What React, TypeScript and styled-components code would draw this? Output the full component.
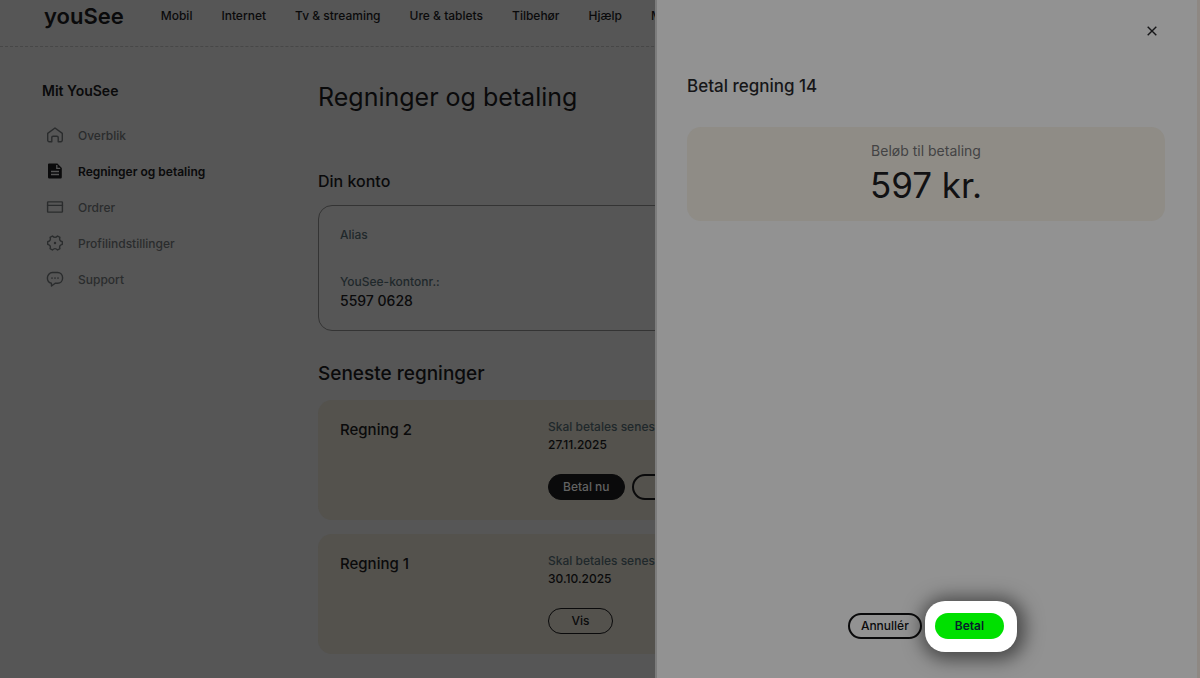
import React from "react";
import styled, { createGlobalStyle, css } from "styled-components";

const ink = "#0a0a0b";
const muted = "#2a2c2d";

const GlobalStyle = createGlobalStyle`
  *, *::before, *::after { box-sizing: border-box; }
  html, body, #root { height: 100%; }
  body {
    margin: 0;
    background: #565656;
    color: ${ink};
    font-family: Inter, "Liberation Sans", sans-serif;
    font-size: 12px;
    overflow: hidden;
  }
  h1, h2, h3, p, dl, dt, dd, ul { margin: 0; padding: 0; }
  ul { list-style: none; }
  a { color: inherit; text-decoration: none; }
  button { font-family: inherit; cursor: pointer; }
`;

const Page = styled.div`
  min-height: 100%;
  overflow: hidden;
`;

const Header = styled.header`
  display: flex;
  align-items: center;
  gap: 37px;
  height: 47px;
  padding: 0 44px 14px;
  border-bottom: 1px dashed #474747;
`;

const Logo = styled.a`
  font-size: 22px;
  line-height: 28px;
  font-weight: 600;
`;

const Nav = styled.nav`
  display: flex;
  gap: 29px;
  font-weight: 500;
  line-height: 20px;
  white-space: nowrap;
`;

const Body = styled.div`
  display: grid;
  grid-template-columns: 276px minmax(0, 1fr);
  padding: 34px 42px 24px;
`;

const SideTitle = styled.h2`
  font-size: 14px;
  line-height: 20px;
  font-weight: 600;
`;

const SideList = styled.ul`
  display: flex;
  flex-direction: column;
  margin-top: 16px;
`;

const SideLink = styled.a<{ $active?: boolean }>`
  display: flex;
  align-items: center;
  gap: 14px;
  height: 36px;
  padding-left: 4px;
  color: ${(p) => (p.$active ? ink : muted)};
  font-weight: ${(p) => (p.$active ? 600 : 500)};

  svg { flex: none; }
`;

const PageTitle = styled.h1`
  font-size: 25px;
  line-height: 32px;
  font-weight: 400;
`;

const SectionTitle = styled.h2<{ $large?: boolean }>`
  font-size: ${(p) => (p.$large ? 19 : 16)}px;
  line-height: 24px;
  font-weight: 500;
`;

const AccountSection = styled.section`
  margin-top: 56px;
`;

const AccountCard = styled.dl`
  display: flex;
  flex-direction: column;
  gap: 27px;
  min-height: 126px;
  margin-top: 12px;
  padding: 19px 21px 18px;
  border: 1px solid #343434;
  border-radius: 14px;
`;

const Term = styled.dt`
  color: #1f282b;
  line-height: 20px;
  font-weight: 500;
`;

const AccountNumber = styled.dd`
  font-size: 14px;
  line-height: 18px;
  font-weight: 500;
`;

const BillSection = styled.section`
  margin-top: 31px;
`;

const BillList = styled.div`
  display: flex;
  flex-direction: column;
  gap: 14px;
  margin-top: 14px;
`;

const BillCard = styled.article`
  display: grid;
  grid-template-columns: 208px minmax(0, 1fr);
  min-height: 120px;
  padding: 18px 22px;
  border-radius: 14px;
  background: #54524d;
`;

const BillTitle = styled.h3`
  font-size: 15px;
  line-height: 24px;
  font-weight: 500;
`;

const DueLabel = styled.p`
  color: #1f282b;
  line-height: 18px;
  font-weight: 500;
  white-space: nowrap;
`;

const DueDate = styled.p`
  line-height: 18px;
  font-weight: 500;
`;

const Actions = styled.div`
  display: flex;
  gap: 7px;
  margin-top: 20px;
`;

const Pill = styled.button<{ $variant?: "solid" | "outline" | "pay"; $thick?: boolean }>`
  height: 26px;
  min-width: 65px;
  padding: 0 14px;
  border: 1px solid ${ink};
  border-radius: 13px;
  background: transparent;
  color: ${ink};
  font-size: 12px;
  font-weight: 500;
  line-height: 20px;

  ${(p) => p.$thick && css`
    padding: 0 11px;
    border-width: 2px;
  `}

  ${(p) => p.$variant === "solid" && css`
    background: ${ink};
    color: #626262;
  `}

  ${(p) => p.$variant === "pay" && css`
    padding: 0 20px;
    border: 0;
    background: #00e000;
    color: #06202a;
    font-weight: 600;
  `}
`;

const Drawer = styled.aside`
  position: fixed;
  inset: 0 0 0 auto;
  display: flex;
  flex-direction: column;
  width: min(545px, 100%);
  padding: 16px 32px 39px 30px;
  border-left: 2px solid #7c7c7c;
  border-right: 3px solid #8e8883;
  background: #929292;
`;

const CloseButton = styled.button`
  display: flex;
  align-items: center;
  justify-content: center;
  align-self: flex-end;
  width: 26px;
  height: 30px;
  padding: 0;
  border: 0;
  background: none;
  color: #161618;
`;

const DrawerTitle = styled.h2`
  margin-top: 28px;
  font-size: 17px;
  line-height: 24px;
  font-weight: 500;
  color: #161618;
`;

const AmountPanel = styled.div`
  margin-top: 29px;
  padding: 14px 16px 12px;
  border-radius: 14px;
  background: #8f8c86;
  text-align: center;
`;

const AmountLabel = styled.p`
  font-size: 14px;
  line-height: 20px;
  color: #434344;
`;

const Amount = styled.p`
  font-size: 35px;
  line-height: 48px;
  color: #111113;
`;

const DrawerFooter = styled.footer`
  display: flex;
  justify-content: center;
  gap: 13px;
  margin-top: auto;
`;

const Spotlight = styled.div`
  position: relative;
  display: flex;

  &::before {
    content: "";
    position: absolute;
    inset: -12px -13px -13px -10px;
    border-radius: 20px;
    background: #fff;
    box-shadow: 2px 2px 18px 6px rgba(0, 0, 0, 0.5);
  }

  button { position: relative; }
`;

const Icon = ({ children }: { children: React.ReactNode }) => (
  <svg width="18" height="18" viewBox="0 0 18 18" fill="none" stroke="currentColor"
    strokeWidth="1.4" strokeLinejoin="round" strokeLinecap="round" aria-hidden="true">
    {children}
  </svg>
);

const HomeIcon = () => (
  <Icon>
    <path d="M1.700 7.400 9 2l7.300 5.400v6.900a1.500 1.500 0 0 1-1.500 1.500h-2.600v-4.300a1.300 1.300 0 0 0-1.300-1.300H7.100a1.300 1.300 0 0 0-1.300 1.300v4.300H3.200a1.500 1.500 0 0 1-1.500-1.500z" />
  </Icon>
);

const BillIcon = () => (
  <svg width="18" height="18" viewBox="0 0 18 18" aria-hidden="true">
    <path fill={ink} d="M3 1.500h8.400L15.800 6v9.200a1.300 1.300 0 0 1-1.300 1.300H3.300A1.300 1.300 0 0 1 2 15.200V2.500a1 1 0 0 1 1-1z" />
    <path stroke="#565656" strokeWidth="1.300" fill="none" d="M5 9.500h8M5 12.500h8M10.800 3v3.400h3.400" />
  </svg>
);

const CardIcon = () => (
  <Icon>
    <rect x="1.600" y="3.900" width="14.800" height="10.200" rx="0.600" />
    <path d="M1.600 7.400h14.800" />
  </Icon>
);

const GearIcon = () => (
  <Icon>
    <path d="M16.300 7.700v2.600Q12.700 11.300 13.900 14.600L11.600 16Q9 13.300 6.400 16L4.100 14.600Q5.300 11.300 1.700 10.300V7.700Q5.300 6.700 4.100 3.400L6.400 2Q9 4.700 11.600 2L13.900 3.400Q12.700 6.700 16.300 7.700z" />
    <circle cx="9" cy="9" r="1.200" fill="currentColor" stroke="none" />
  </Icon>
);

const ChatIcon = () => (
  <Icon>
    <path d="M5.400 13.200C3 12.800 1.400 10.700 1.400 8S3.600 2.500 6.400 2.500h5.200c2.900 0 5 2.400 5 5.400s-2.100 5.300-5 5.300H9.200L5.500 16z" />
    <path strokeWidth="1.700" d="M6 8h.01M9 8h.01M12 8h.01" />
  </Icon>
);

const navItems = ["Mobil", "Internet", "Tv & streaming", "Ure & tablets", "Tilbehør", "Hjælp", "Mit YouSee"];

const sideItems = [
  { label: "Overblik", icon: <HomeIcon /> },
  { label: "Regninger og betaling", icon: <BillIcon />, active: true },
  { label: "Ordrer", icon: <CardIcon /> },
  { label: "Profilindstillinger", icon: <GearIcon /> },
  { label: "Support", icon: <ChatIcon /> },
];

export default function App() {
  return (
    <>
      <GlobalStyle />
      <Page>
        <Header>
          <Logo href="#">youSee</Logo>
          <Nav>
            {navItems.map((item) => <a key={item} href="#">{item}</a>)}
          </Nav>
        </Header>
        <Body>
          <nav aria-label="Mit YouSee">
            <SideTitle>Mit YouSee</SideTitle>
            <SideList>
              {sideItems.map((item) => (
                <li key={item.label}>
                  <SideLink href="#" $active={item.active}>
                    {item.icon}
                    {item.label}
                  </SideLink>
                </li>
              ))}
            </SideList>
          </nav>
          <main>
            <PageTitle>Regninger og betaling</PageTitle>
            <AccountSection>
              <SectionTitle>Din konto</SectionTitle>
              <AccountCard>
                <div><Term>Alias</Term></div>
                <div>
                  <Term>YouSee-kontonr.:</Term>
                  <AccountNumber>5597 0628</AccountNumber>
                </div>
              </AccountCard>
            </AccountSection>
            <BillSection>
              <SectionTitle $large>Seneste regninger</SectionTitle>
              <BillList>
                <BillCard>
                  <BillTitle>Regning 2</BillTitle>
                  <div>
                    <DueLabel>Skal betales senest</DueLabel>
                    <DueDate>27.11.2025</DueDate>
                    <Actions>
                      <Pill $variant="solid">Betal nu</Pill>
                      <Pill $thick aria-label="Vis regning 2" />
                    </Actions>
                  </div>
                </BillCard>
                <BillCard>
                  <BillTitle>Regning 1</BillTitle>
                  <div>
                    <DueLabel>Skal betales senest</DueLabel>
                    <DueDate>30.10.2025</DueDate>
                    <Actions>
                      <Pill>Vis</Pill>
                    </Actions>
                  </div>
                </BillCard>
              </BillList>
            </BillSection>
          </main>
        </Body>
      </Page>
      <Drawer role="dialog" aria-labelledby="drawer-title">
        <CloseButton aria-label="Luk">
          <svg width="10" height="10" viewBox="0 0 10 10" stroke="currentColor" strokeWidth="1.400" aria-hidden="true">
            <path d="M.7.7l8.600 8.600M9.300.7.7 9.300" />
          </svg>
        </CloseButton>
        <DrawerTitle id="drawer-title">Betal regning 14</DrawerTitle>
        <AmountPanel>
          <AmountLabel>Beløb til betaling</AmountLabel>
          <Amount>597 kr.</Amount>
        </AmountPanel>
        <DrawerFooter>
          <Pill $thick>Annullér</Pill>
          <Spotlight>
            <Pill $variant="pay">Betal</Pill>
          </Spotlight>
        </DrawerFooter>
      </Drawer>
    </>
  );
}
